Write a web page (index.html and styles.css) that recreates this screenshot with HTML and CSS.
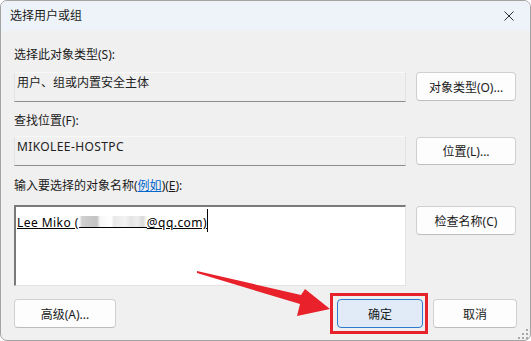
FILE: index.html
```html
<!DOCTYPE html>
<html lang="zh-CN">
<head>
  <meta charset="utf-8" />
  <meta name="viewport" content="width=device-width, initial-scale=1" />
  <title>选择用户或组</title>
  <link rel="stylesheet" href="styles.css">
</head>
<body>
  <div class="window" role="dialog" aria-labelledby="dlg-title">
    <header class="titlebar">
      <span class="title" id="dlg-title">选择用户或组</span>
      <button class="close" aria-label="关闭">
        <svg width="10" height="10" viewBox="0 0 10 10" aria-hidden="true">
          <path d="M0.5 0.5 L9.5 9.5 M9.5 0.5 L0.5 9.5" stroke="#2b2b2b" stroke-width="1" fill="none" />
        </svg>
      </button>
    </header>

    <main class="content">
      <section class="group g-type">
        <div class="label">选择此对象类型(S):</div>
        <div class="row">
          <div class="field">用户、组或内置安全主体</div>
          <button class="btn">对象类型(O)...</button>
        </div>
      </section>

      <section class="group g-location">
        <div class="label">查找位置(F):</div>
        <div class="row">
          <div class="field latin">MIKOLEE-HOSTPC</div>
          <button class="btn">位置(L)...</button>
        </div>
      </section>

      <section class="group g-names">
        <div class="label">输入要选择的对象名称(<a href="#" class="link">例如</a>)(<u>E</u>):</div>
        <div class="row">
          <div class="names">
            <span class="entry">Lee Miko (<span class="blur" aria-hidden="true"></span>@qq.com)</span><span class="caret"></span>
          </div>
          <button class="btn">检查名称(C)</button>
        </div>
      </section>

      <div class="actions">
        <button class="btn btn-adv">高级(A)...</button>
        <div class="confirm">
          <button class="btn btn-ok">确定</button>
          <button class="btn btn-cancel">取消</button>
        </div>
      </div>
    </main>

    <!-- annotation: red arrow pointing at OK -->
    <svg class="arrow" width="531" height="341" viewBox="0 0 531 341" aria-hidden="true">
      <polygon points="197,271 301,295 305,289 330,309 297,316 300,304 197,273" fill="#e8212a" />
    </svg>
    <div class="highlight"></div>

    <svg class="grip" width="10" height="10" viewBox="0 0 10 10" aria-hidden="true">
      <g fill="#a8a8a8">
        <rect x="8" y="0" width="2" height="2" />
        <rect x="4" y="4" width="2" height="2" />
        <rect x="8" y="4" width="2" height="2" />
        <rect x="0" y="8" width="2" height="2" />
        <rect x="4" y="8" width="2" height="2" />
        <rect x="8" y="8" width="2" height="2" />
      </g>
    </svg>
  </div>
</body>
</html>
```

FILE: styles.css
```css
:root {
  --face: #f0f0f0;
  --title: #eef3f9;
  --text: #1a1a1a;
  --btn-border: #d0d0d0;
  --accent: #2f7ad0;
  --mark: #e6222b;
}
* { box-sizing: border-box; }
html, body {
  margin: 0;
  background: #ffffff;
  font-family: "Segoe UI", "Noto Sans", "Noto Sans CJK SC", sans-serif;
  font-size: 12px;
  color: var(--text);
}
.window {
  position: relative;
  width: 531px;
  height: 341px;
  border: 1px solid #a3a3a3;
  border-radius: 7px;
  background: var(--face);
  overflow: hidden;
}
.titlebar {
  height: 30px;
  background: var(--title);
  display: flex;
  align-items: center;
  justify-content: space-between;
  padding: 0 16px 0 9px;
}
.title { line-height: 16px; }
.close {
  border: 0; background: transparent; padding: 0;
  width: 10px; height: 10px; display: block;
}
.close svg { display: block; }

.content { padding: 16px 13px 0 13px; }
.label { line-height: 16px; }
.g-type .label { margin-bottom: 9px; }
.g-location .label { margin-top: 11px; margin-bottom: 7px; }
.g-names .label { margin-top: 12px; margin-bottom: 11px; }
.link { color: #0066cc; text-decoration: underline; }

.row { display: flex; align-items: flex-start; gap: 10px; }
.field {
  width: 392px; height: 30px;
  border: 1px solid #e2e2e2;
  border-top-color: #f8f8f8;
  border-bottom-color: #8d8d8d;
  padding: 2px 2px;
  line-height: 16px;
  color: #222;
}
.latin { letter-spacing: 0.4px; }
.names {
  width: 392px; height: 81px;
  background: #ffffff;
  border-top: 2px solid #7a7a7a;
  border-left: 2px solid #7a7a7a;
  border-right: 1px solid #e3e3e3;
  border-bottom: 1px solid #e3e3e3;
  padding: 8px 1px 0;
  line-height: 16px;
  display: flex;
  align-items: flex-start;
}
.entry {
  color: #000;
  letter-spacing: 0.45px;
  text-decoration: underline;
  text-underline-offset: 1px;
  white-space: nowrap;
}
.blur {
  display: inline-block;
  width: 68px; height: 12px;
  vertical-align: -1px;
  box-shadow: inset 0 -1px 0 #000;
  background: linear-gradient(90deg,
    #ffffff 0px, #cfcfcf 3px, #c3c3c3 18px, #f6f6f6 21px,
    #ffffff 32px, #e9e9e9 35px, #f3f3f3 46px, #e4e4e4 52px,
    #ededed 58px, #d9d9d9 64px, #ffffff 68px);
}
.caret {
  display: inline-block;
  width: 1px; height: 23px;
  margin-top: -6px;
  background: #000;
}

.btn {
  width: 100px; height: 29px;
  border: 1px solid var(--btn-border);
  border-bottom-color: #bdbdbd;
  border-radius: 4px;
  background: #fdfdfd;
  font: inherit;
  color: var(--text);
  padding: 0;
}
.g-location .btn { margin-top: 1px; height: 28px; }
.g-names .btn { margin-top: 1px; }

.actions {
  display: flex; justify-content: space-between; align-items: center;
  margin-top: 13px;
}
.confirm { display: flex; gap: 10px; }
.btn-adv { width: 102px; }
.btn-ok {
  width: 86px;
  background: #e0ebf7;
  border: 1px solid var(--accent);
}
.btn-cancel { width: 84px; }

.arrow { position: absolute; left: -1px; top: -1px; pointer-events: none; }
.highlight {
  position: absolute;
  left: 329px; top: 292px;
  width: 98px; height: 41px;
  border: 3px solid var(--mark);
  pointer-events: none;
}
.grip { position: absolute; right: 2px; bottom: 1px; }
```
